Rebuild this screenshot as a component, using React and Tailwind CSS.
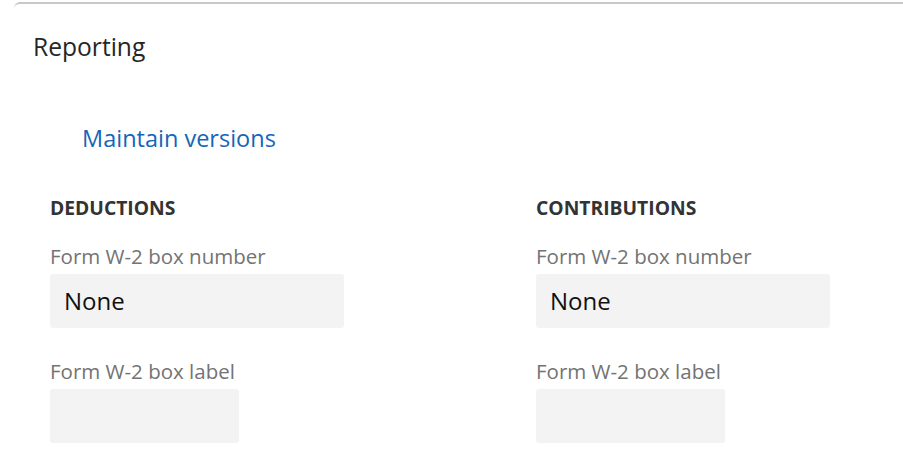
import React from 'react';

const font = { fontFamily: '"Open Sans", "Noto Sans", sans-serif' };

const Field = ({ label, value, width, className = '' }) => (
  <div className={`flex flex-col ${className}`}>
    <label className="text-[20.5px] leading-[26px] text-[#737373]">{label}</label>
    <div className={`${width} h-[54px] mt-[5px] rounded-[3px] bg-[#f3f3f3] flex items-center px-[14px] text-[24px] text-[#111]`}>
      {value}
    </div>
  </div>
);

const Column = ({ title }) => (
  <div className="flex flex-col">
    <h4 className="text-[19.3px] leading-[24px] font-bold text-[#333]">{title}</h4>
    <Field className="mt-[23px]" label="Form W-2 box number" value="None" width="w-[294px]" />
    <Field className="mt-[30px]" label="Form W-2 box label" value="" width="w-[189px]" />
  </div>
);

export default function App() {
  return (
    <div className="w-[903px] h-[465px] bg-white overflow-hidden" style={font}>
      <div className="ml-[14px] mt-[2px] border-t-2 border-[#c8c8c8] rounded-tl-[6px] h-full">
        <div className="pl-[19px] pt-[27px]">
          <h2 className="text-[24.6px] leading-[32px] text-[#262626]">Reporting</h2>
        </div>
        <div className="pl-[68px] mt-[59px]">
          <a className="text-[23.5px] leading-[32px] text-[#1566b7]" href="#">Maintain versions</a>
        </div>
        <div className="pl-[36px] mt-[42px] flex gap-[192px]">
          <Column title="DEDUCTIONS" />
          <Column title="CONTRIBUTIONS" />
        </div>
      </div>
    </div>
  );
}
